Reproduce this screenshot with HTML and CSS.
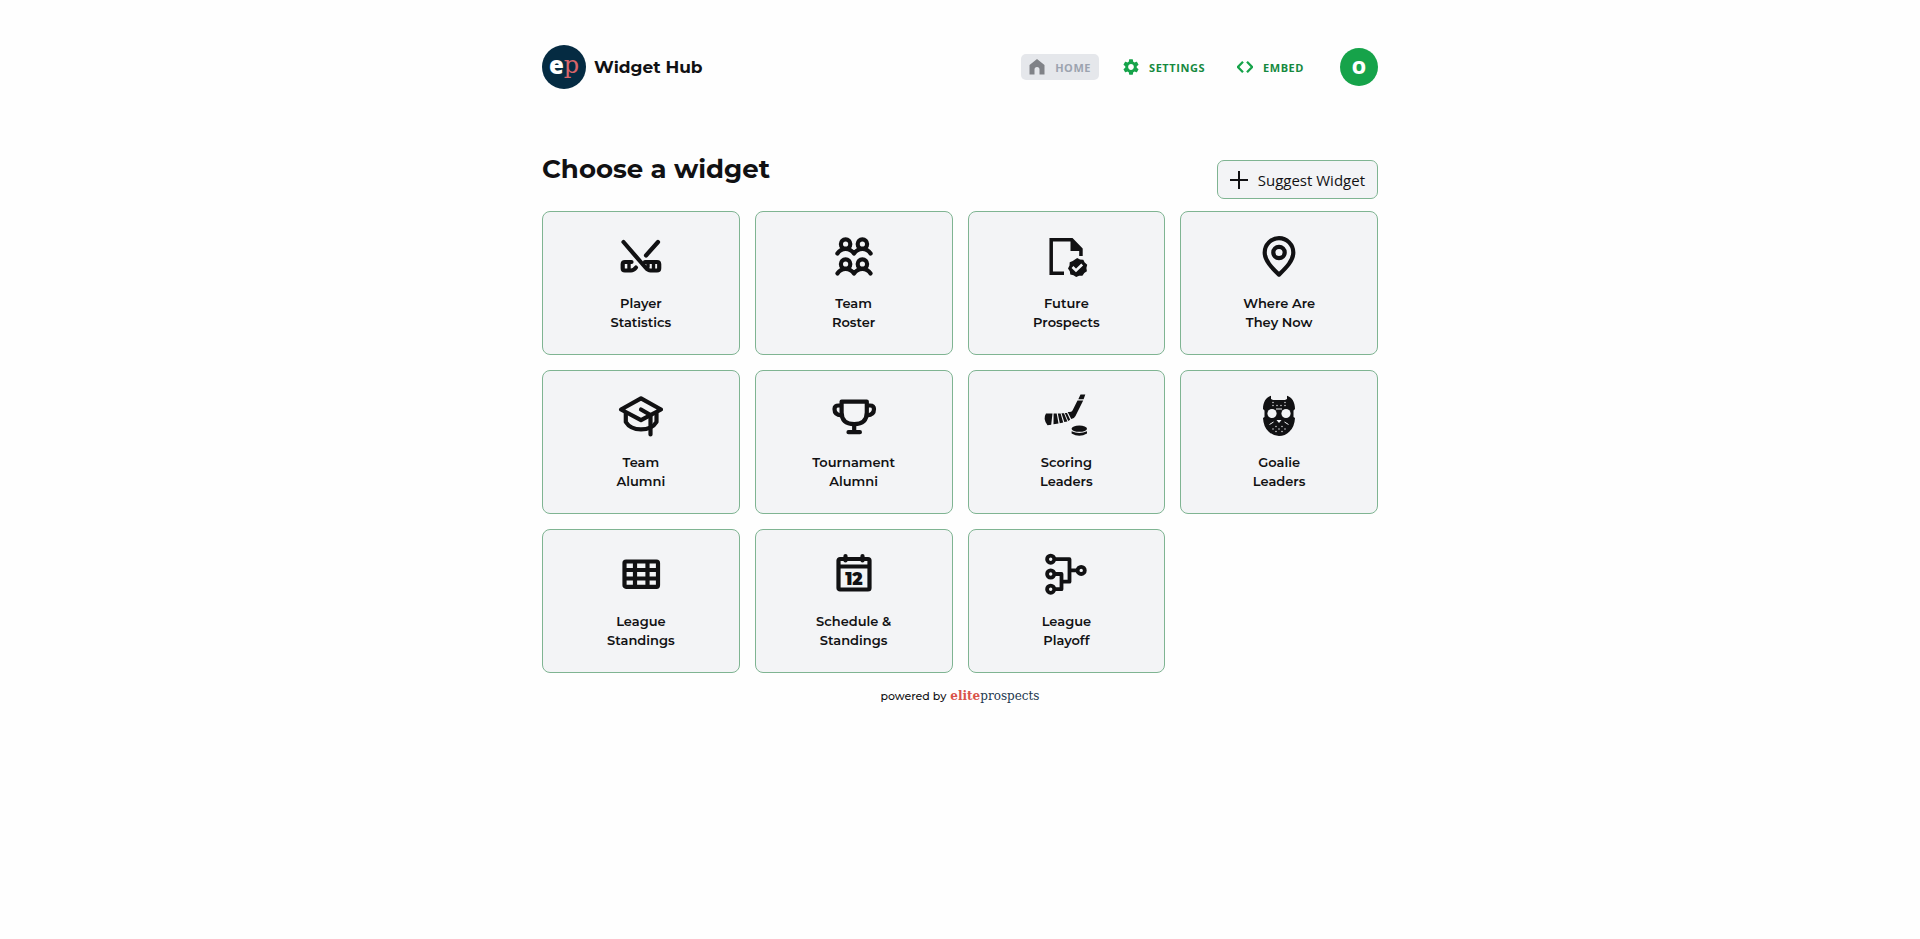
FILE: index.html
```html
<!DOCTYPE html>
<html lang="en">
<head>
  <meta charset="UTF-8" />
  <meta name="viewport" content="width=device-width, initial-scale=1.0" />
  <title>Widget Hub</title>
  <link rel="stylesheet" href="styles.css">
</head>
<body>
  <div class="container">
    <header class="site-header">
      <a href="#" class="brand">
        <span class="brand-logo"><span class="logo-e">e</span><span class="logo-p">p</span></span>
        <span class="brand-name">Widget Hub</span>
      </a>
      <nav class="main-nav">
        <a href="#" class="nav-link active">
          <svg class="nav-icon" viewBox="0 0 16 16"><path d="M8 0 .5 6v9.500h5V10.500a2.500 2.500 0 0 1 5 0v5h5V6z" fill="currentColor"/></svg>
          Home
        </a>
        <a href="#settings" class="nav-link">
          <svg class="nav-icon" viewBox="2 2 20 20"><path fill="currentColor" d="M19.140 12.940c.04-.3.060-.61.060-.94 0-.32-.02-.64-.07-.94l2.030-1.580a.49.49 0 0 0 .12-.61l-1.920-3.320a.488.488 0 0 0-.59-.22l-2.390.96c-.5-.38-1.030-.7-1.620-.94l-.36-2.540a.484.484 0 0 0-.48-.41h-3.840c-.24 0-.43.17-.47.41l-.36 2.540c-.59.24-1.130.57-1.620.94l-2.390-.96c-.22-.08-.47 0-.59.22L2.740 8.870c-.12.21-.08.47.12.61l2.030 1.580c-.05.3-.09.63-.09.94s.02.64.07.94l-2.030 1.580a.49.49 0 0 0-.12.61l1.920 3.320c.12.22.37.29.59.22l2.390-.96c.5.38 1.030.7 1.620.94l.36 2.540c.05.24.24.41.48.41h3.840c.24 0 .44-.17.47-.41l.36-2.540c.59-.24 1.130-.56 1.620-.94l2.390.96c.22.08.47 0 .59-.22l1.920-3.320c.12-.22.07-.47-.12-.61zM12 15.600c-1.980 0-3.600-1.620-3.600-3.600s1.620-3.600 3.600-3.600 3.600 1.620 3.600 3.600-1.620 3.600-3.600 3.600"/></svg>
          Settings
        </a>
        <a href="#embed" class="nav-link">
          <svg class="nav-icon" viewBox="0 0 16 16"><path d="M6 2.800.9 8 6 13.200M10 2.800 15.100 8 10 13.200" fill="none" stroke="currentColor" stroke-width="2.300"/></svg>
          Embed
        </a>
        <button class="avatar" aria-label="Account">O</button>
      </nav>
    </header>

    <main>
      <div class="title-row">
        <h1>Choose a widget</h1>
        <button class="suggest-button">
          <svg class="plus-icon" viewBox="0 0 18 18"><path d="M9 0v18M0 9h18" stroke="currentColor" stroke-width="2"/></svg>
          Suggest Widget
        </button>
      </div>

      <div class="widget-grid">
        <a href="#player-statistics" class="widget-card">
          <svg class="widget-icon" viewBox="0 0 48 48">
            <g fill="none" stroke="currentColor" stroke-width="4.200" stroke-linecap="round" stroke-linejoin="round">
              <path d="M6.500 9 28.500 34.500q2.500 3 5 3h6.500q2.200 0 2.200-2.200v-4.100q0-2.200-2.200-2.200H28"/>
              <path d="M41 9 29 22.500"/>
              <path d="M14.500 29H7.900q-2.200 0-2.200 2.200v4.100q0 2.200 2.200 2.200H14q2.500 0 5-3"/>
              <path d="M12 29v8M36.500 29v8M31 30v4" stroke-width="3.400"/>
            </g>
          </svg>
          <span>Player<br>Statistics</span>
        </a>
        <a href="#team-roster" class="widget-card">
          <svg class="widget-icon" viewBox="0 0 48 48">
            <g fill="none" stroke="currentColor" stroke-width="4.200" stroke-linecap="round" stroke-linejoin="round">
              <circle cx="15.600" cy="11" r="4.700"/><circle cx="32.400" cy="11" r="4.700"/>
              <path d="M7.400 20.500q3-4.500 8.200-4.500T24 20.500q3.200-4.500 8.400-4.500t8.200 4.500"/>
              <circle cx="15.600" cy="31" r="4.700"/><circle cx="32.400" cy="31" r="4.700"/>
              <path d="M7.400 40.500q3-4.500 8.200-4.500t8.400 4.500q3.200-4.500 8.400-4.500t8.200 4.500"/>
            </g>
          </svg>
          <span>Team<br>Roster</span>
        </a>
        <a href="#future-prospects" class="widget-card">
          <svg class="widget-icon" viewBox="0 0 48 48">
            <path d="M22 40.200H9.200V6.700H30" fill="none" stroke="currentColor" stroke-width="3.500"/>
            <path d="M28.500 5h2L40.700 15.500V23h-3.500v-5h-8.700z" fill="currentColor"/>
            <path d="m35.200 25 2.800 1.600 3.300.1 1.400 2.900 2.500 2.200-.8 3.200.5 3.200-2.600 1.900-1.900 2.700-3.300-.1-2.900 1.400-2.700-1.900-3.200-.8-.5-3.200-1.800-2.700 1.500-2.900.2-3.300 3-1.200z" fill="currentColor"/>
            <path d="m30.500 34 3.500 3.500 6.200-6" fill="none" stroke="#f3f4f6" stroke-width="2.600"/>
          </svg>
          <span>Future<br>Prospects</span>
        </a>
        <a href="#where-are-they-now" class="widget-card">
          <svg class="widget-icon" viewBox="0 0 48 48">
            <g fill="none" stroke="currentColor" stroke-width="4.200" stroke-linejoin="round">
              <path d="M24 41.600C16.500 34.500 9.700 27.500 9.700 19.500a14.300 14.300 0 0 1 28.600 0C38.300 27.500 31.500 34.500 24 41.600z"/>
              <circle cx="24" cy="19.500" r="5.700"/>
            </g>
          </svg>
          <span>Where Are<br>They Now</span>
        </a>
        <a href="#team-alumni" class="widget-card">
          <svg class="widget-icon" viewBox="0 0 48 48">
            <g fill="none" stroke="currentColor" stroke-width="4.200" stroke-linecap="round" stroke-linejoin="round">
              <path d="M24 6.400 4 17.500l20 10.700 20-10.700z"/>
              <path d="M8.800 21.500V30q4.500 7.400 15.200 7.400 11 0 15.500-7.400v-8.500"/>
              <path d="m24 17.500 9.500 5.500v19.500"/>
            </g>
          </svg>
          <span>Team<br>Alumni</span>
        </a>
        <a href="#tournament-alumni" class="widget-card">
          <svg class="widget-icon" viewBox="0 0 48 48">
            <g fill="none" stroke="currentColor" stroke-width="4.200" stroke-linecap="round" stroke-linejoin="round">
              <path d="M11.600 9.600h25.200v11q0 11.600-12.600 11.600T11.600 20.600z"/>
              <path d="M11 13.500H8.500q-4 0-4 3.500 0 6 7 6.500M37.500 13.500H40q4 0 4 3.500 0 6-7 6.500"/>
              <path d="M24.200 32.500V40M18.500 40.200h11.400"/>
            </g>
          </svg>
          <span>Tournament<br>Alumni</span>
        </a>
        <a href="#scoring-leaders" class="widget-card">
          <svg class="widget-icon" viewBox="0 0 48 48">
            <g fill="currentColor">
              <path d="M38.500 2.500h4.800l-1.700 4.800h-5.300zM35.500 8.500h5.700L33.500 24q-1.500 3-4.300 3L25.700 20q3.800.5 4.800-1.500z"/>
              <path d="M4 21.500h6.500l-1.300 11.200-3.700.5Q.5 27 4 21.500zM11.600 21.500h3.100L16.500 31.500l-5 .8zM15.800 21.400h2.800l2.600 9-3.400.8zM19.500 21.200H22l3.400 8.200-3.100.7zM22.800 21h2.200l3.200 6.700-2 1.200z"/>
              <ellipse cx="37.300" cy="36.700" rx="7.700" ry="3.100"/>
              <path d="M29.600 39.300q7.700 3.200 15.400 0v2.200q-7.700 4.400-15.400 0z"/>
            </g>
          </svg>
          <span>Scoring<br>Leaders</span>
        </a>
        <a href="#goalie-leaders" class="widget-card">
          <svg class="widget-icon" viewBox="0 0 48 48">
            <path d="M16 3.800V7l2 1h12l2-1V3.800C37 5.500 40 10 40 17l-1.500 1.500V25L40 26q-.5 9-5.500 13.500Q30 44 24 44t-10.500-4.500Q8.500 35 8 26l1.500-1v-6.500L8 17C8 10 11 5.500 16 3.800z" fill="currentColor"/>
            <g fill="#f3f4f6">
              <circle cx="17" cy="21.500" r="4.600"/><circle cx="31" cy="21.500" r="4.600"/>
              <path d="M21.500 28h5L24 31z"/>
              <circle cx="18" cy="10.500" r=".7"/><circle cx="18" cy="13.500" r=".7"/><circle cx="22" cy="13.500" r=".7"/><circle cx="26" cy="13.500" r=".7"/><circle cx="30" cy="13.500" r=".7"/><circle cx="30" cy="10.500" r=".7"/>
              <circle cx="21" cy="34.500" r=".7"/><circle cx="27" cy="34.500" r=".7"/><circle cx="18" cy="37" r=".7"/><circle cx="30" cy="37" r=".7"/><circle cx="24" cy="37" r=".7"/><circle cx="21" cy="39.500" r=".7"/><circle cx="27" cy="39.500" r=".7"/>
            </g>
            <path d="m14.500 32.500 4-2.500M33.500 32.500l-4-2.500M21 17h6" stroke="#f3f4f6"/>
          </svg>
          <span>Goalie<br>Leaders</span>
        </a>
        <a href="#league-standings" class="widget-card">
          <svg class="widget-icon" viewBox="0 0 48 48">
            <g fill="none" stroke="currentColor" stroke-width="4.200">
              <rect x="7.500" y="10.500" width="33.500" height="25.300" rx="1.500"/>
              <path d="M18 10v26M30.500 10v26M7 19h34M7 27.500h34"/>
            </g>
          </svg>
          <span>League<br>Standings</span>
        </a>
        <a href="#schedule-standings" class="widget-card">
          <svg class="widget-icon" viewBox="0 0 48 48">
            <g fill="none" stroke="currentColor" stroke-width="4.200" stroke-linecap="round" stroke-linejoin="round">
              <rect x="8.500" y="8" width="31" height="30.500" rx="1.500"/>
              <path d="M9 15.500h30M15.500 5v4.500M32.500 5v4.500"/>
            </g>
            <text x="24" y="34" text-anchor="middle" class="calendar-day">12</text>
          </svg>
          <span>Schedule &amp;<br>Standings</span>
        </a>
        <a href="#league-playoff" class="widget-card">
          <svg class="widget-icon" viewBox="0 0 48 48">
            <g fill="none" stroke="currentColor" stroke-width="3.800" stroke-linejoin="round">
              <circle cx="8.700" cy="8.200" r="3.600"/><circle cx="8.700" cy="23" r="3.600"/><circle cx="8.700" cy="38.200" r="3.600"/><circle cx="39.200" cy="19.400" r="3.600"/>
              <path d="M12.500 8.200h15v22.500h-8M12.500 23h7v15.200h-7M27.500 19.400h8"/>
            </g>
          </svg>
          <span>League<br>Playoff</span>
        </a>
      </div>
    </main>

    <footer class="site-footer">
      powered by
      <a href="#" class="footer-logo"><span class="elite">elite</span>prospects</a>
    </footer>
  </div>
</body>
</html>
```
FILE: styles.css
```css
:root {
  --bg: #fefefe;
  --text: #111113;
  --green: #16a34a;
  --green-dark: #15893e;
  --card-bg: #f3f4f6;
  --card-border: #7fb492;
  --navy: #052b42;
  --red: #d9534a;
}

* {
  margin: 0;
  padding: 0;
  box-sizing: border-box;
}

body {
  background-color: var(--bg);
  color: var(--text);
  font-family: Montserrat, Inter, sans-serif;
}

a {
  color: inherit;
  text-decoration: none;
}

.container {
  max-width: 868px;
  margin: 0 auto;
  padding: 45px 16px;
}

.site-header {
  display: flex;
  justify-content: space-between;
  align-items: center;
}

.brand {
  display: flex;
  align-items: center;
  gap: 8px;
}

.brand-logo {
  display: flex;
  justify-content: center;
  width: 44px;
  height: 44px;
  border-radius: 50%;
  background-color: var(--navy);
  font-size: 24px;
  line-height: 40px;
}

.logo-e {
  color: #fff;
  font-family: "Open Sans", sans-serif;
  font-weight: 800;
}

.logo-p {
  color: #d9656a;
  font-family: "DejaVu Serif", serif;
}

.brand-name {
  font-size: 17px;
  font-weight: 700;
}

.main-nav {
  display: flex;
  align-items: center;
  gap: 16px;
}

.nav-link {
  display: flex;
  align-items: center;
  gap: 10px;
  height: 26px;
  padding: 0 8px;
  border-radius: 5px;
  color: var(--green-dark);
  font-family: "Open Sans", sans-serif;
  font-size: 11px;
  font-weight: 700;
  letter-spacing: 0.05em;
  text-transform: uppercase;
}

.nav-link.active {
  background-color: #e5e7eb;
  color: #9ca3af;
}

.nav-icon {
  width: 16px;
  height: 16px;
  color: var(--green);
}

.active .nav-icon {
  color: #808287;
}

.avatar {
  width: 38px;
  height: 38px;
  margin-left: 12px;
  border: none;
  border-radius: 50%;
  background-color: var(--green);
  color: #fff;
  font-family: "Open Sans", sans-serif;
  font-size: 18px;
  font-weight: 800;
  cursor: pointer;
}

.title-row {
  display: flex;
  justify-content: space-between;
  align-items: flex-end;
  margin: 64px 0 12px;
}

h1 {
  align-self: flex-start;
  font-size: 26px;
  font-weight: 700;
  line-height: 32px;
}

.suggest-button {
  display: flex;
  align-items: center;
  gap: 10px;
  height: 39px;
  margin-top: 7px;
  padding: 0 12px;
  border: 1px solid var(--card-border);
  border-radius: 7px;
  background-color: var(--card-bg);
  color: var(--text);
  font-family: "Open Sans", sans-serif;
  font-size: 15px;
  cursor: pointer;
}

.plus-icon {
  width: 18px;
  height: 18px;
}

.widget-grid {
  display: grid;
  grid-template-columns: repeat(4, 1fr);
  gap: 15px;
}

.widget-card {
  display: flex;
  flex-direction: column;
  align-items: center;
  gap: 13px;
  padding: 21px 16px 22px;
  border: 1px solid var(--card-border);
  border-radius: 8px;
  background-color: var(--card-bg);
  font-size: 13px;
  font-weight: 600;
  line-height: 19px;
  text-align: center;
}

.widget-icon {
  width: 48px;
  height: 48px;
}

.calendar-day {
  fill: currentColor;
  font-size: 17px;
  font-weight: 900;
}

.site-footer {
  display: flex;
  justify-content: center;
  align-items: baseline;
  gap: 4px;
  margin-top: 16px;
  font-size: 11px;
  font-weight: 500;
}

.footer-logo {
  color: #22384f;
  font-family: "DejaVu Serif", serif;
  font-size: 12px;
}

.elite {
  color: var(--red);
  font-weight: 700;
}

@media (max-width: 700px) {
  .widget-grid {
    grid-template-columns: repeat(2, 1fr);
  }

  .site-header {
    flex-direction: column;
    gap: 16px;
  }
}
```
